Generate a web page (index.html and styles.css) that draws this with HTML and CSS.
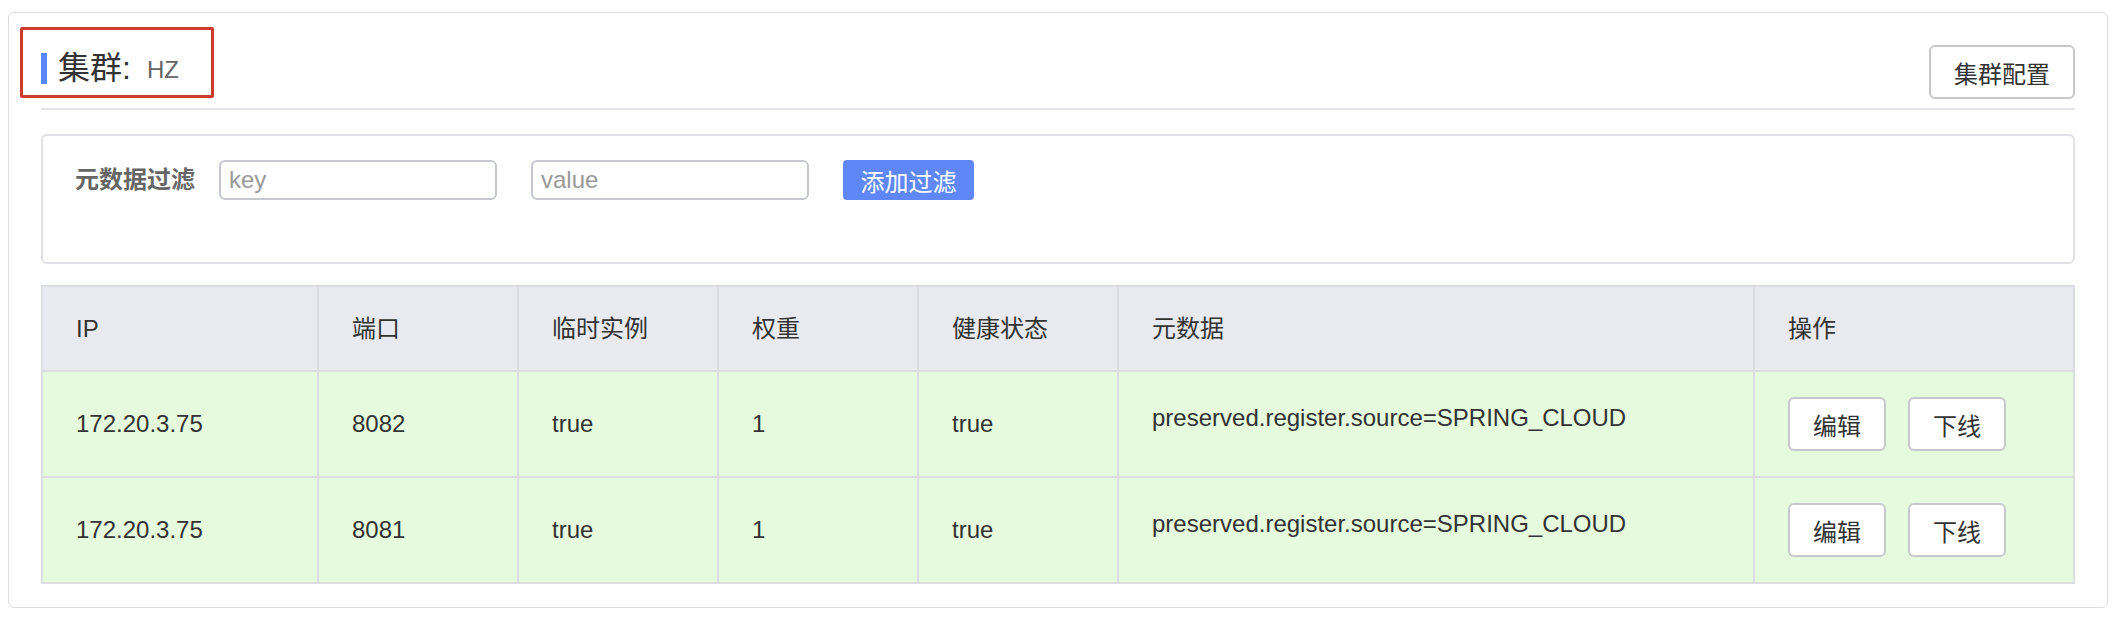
FILE: index.html
```html
<!DOCTYPE html>
<html lang="zh-CN">
<head>
<meta charset="utf-8">
<title>集群</title>
<link rel="stylesheet" href="styles.css">
</head>
<body>
<div class="card">
  <div class="annot"></div>
  <div class="header">
    <div class="title"><span class="bar"></span><span class="title-text">集群:</span><span class="cluster-name">HZ</span></div>
    <button class="btn btn-cfg">集群配置</button>
  </div>
  <div class="filter">
    <span class="filter-label">元数据过滤</span>
    <input class="input" type="text" placeholder="key">
    <input class="input" type="text" placeholder="value">
    <button class="btn-primary">添加过滤</button>
  </div>
  <table class="grid">
    <colgroup>
      <col class="w-ip"><col class="w-200"><col class="w-200"><col class="w-200"><col class="w-200"><col class="w-meta"><col class="w-op">
    </colgroup>
    <thead>
      <tr><th>IP</th><th>端口</th><th>临时实例</th><th>权重</th><th>健康状态</th><th>元数据</th><th>操作</th></tr>
    </thead>
    <tbody>
      <tr>
        <td>172.20.3.75</td><td>8082</td><td>true</td><td>1</td><td>true</td>
        <td class="meta">preserved.register.source=SPRING_CLOUD</td>
        <td><div class="ops"><button class="btn btn-sm">编辑</button><button class="btn btn-sm">下线</button></div></td>
      </tr>
      <tr>
        <td>172.20.3.75</td><td>8081</td><td>true</td><td>1</td><td>true</td>
        <td class="meta">preserved.register.source=SPRING_CLOUD</td>
        <td><div class="ops"><button class="btn btn-sm">编辑</button><button class="btn btn-sm">下线</button></div></td>
      </tr>
    </tbody>
  </table>
</div>
</body>
</html>
```
FILE: styles.css
```css
* { box-sizing: border-box; }
html, body { margin: 0; padding: 0; background: #fff; }
body {
  padding: 12px 16px 0 8px;
  font-family: "Liberation Sans", "Noto Sans CJK SC", sans-serif;
  color: #333;
}
.card {
  position: relative;
  width: 2100px;
  height: 596px;
  border: 1px solid #dcdde1;
  border-radius: 6px;
  padding: 32px 32px 0 32px;
}
.annot {
  position: absolute;
  left: 11px;
  top: 14px;
  width: 194px;
  height: 71px;
  border: 3px solid #cd3b2d;
  border-radius: 2px;
}
.header {
  display: flex;
  justify-content: space-between;
  align-items: flex-start;
  height: 65px;
  border-bottom: 2px solid #e4e5e9;
}
.title {
  display: flex;
  align-items: center;
  margin-top: 3px;
  height: 40px;
}
.bar {
  display: inline-block;
  width: 6px;
  height: 31px;
  background: #5b86f6;
  margin-right: 11px;
}
.title-text {
  font-size: 32px;
  line-height: 40px;
  color: #333;
}
.cluster-name {
  font-size: 24px;
  line-height: 40px;
  color: #666;
  margin-left: 16px;
  margin-top: 4px;
}
.btn {
  font-family: "Liberation Sans", "Noto Sans CJK SC", sans-serif;
  background: #fff;
  border: 2px solid #c6c8ce;
  border-radius: 6px;
  color: #333;
  font-size: 24px;
  padding: 0;
  cursor: pointer;
}
.btn-cfg {
  width: 146px;
  height: 54px;
}
.filter {
  margin-top: 24px;
  height: 130px;
  border: 2px solid #e0e1e5;
  border-radius: 6px;
  padding: 24px 32px;
  display: flex;
  align-items: flex-start;
}
.filter-label {
  font-size: 24px;
  font-weight: bold;
  color: #666;
  line-height: 40px;
  margin-right: 24px;
}
.input {
  width: 278px;
  height: 40px;
  border: 2px solid #c6c8ce;
  border-radius: 6px;
  padding: 0 8px;
  font-size: 24px;
  font-family: "Liberation Sans", sans-serif;
  color: #333;
  margin-right: 34px;
  outline: none;
}
.input::placeholder { color: #999; }
.btn-primary {
  width: 131px;
  height: 40px;
  background: #5f87f7;
  color: #fff;
  border: none;
  border-radius: 4px;
  font-size: 24px;
  font-family: "Liberation Sans", "Noto Sans CJK SC", sans-serif;
  padding: 0;
}
.grid {
  margin-top: 21px;
  width: 2032px;
  border-collapse: collapse;
  table-layout: fixed;
  font-size: 24px;
  color: #333;
}
.w-ip { width: 276px; }
.w-200 { width: 200px; }
.w-meta { width: 636px; }
.w-op { width: 320px; }
.grid th, .grid td {
  border: 2px solid #dcdde1;
  text-align: left;
  padding: 0 0 0 33px;
  font-weight: normal;
  line-height: 30px;
}
.grid th {
  background: #e9eaef;
  height: 85px;
}
.grid td {
  background: #e6fadd;
  height: 106px;
}
.grid td.meta {
  vertical-align: top;
  padding-top: 31px;
}
.ops {
  display: flex;
  gap: 22px;
}
.btn-sm {
  width: 98px;
  height: 54px;
}
```
